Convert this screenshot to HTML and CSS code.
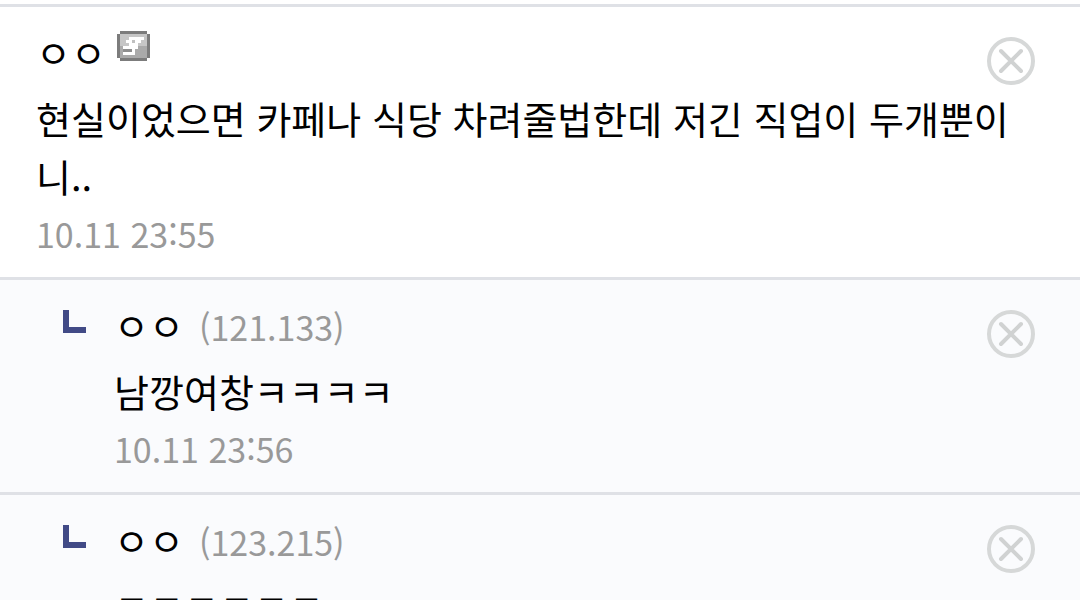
FILE: index.html
```html
<!DOCTYPE html>
<html lang="ko">
<head>
    <meta charset="UTF-8">
    <meta name="viewport" content="width=device-width, initial-scale=1.0">
    <title>댓글</title>
    <link rel="stylesheet" href="styles.css">
</head>
<body>
    <svg class="sprite" aria-hidden="true">
        <symbol id="icon-delete" viewBox="0 0 50 50">
            <circle cx="25" cy="25" r="22" fill="none" stroke="#d6d8d8" stroke-width="4"/>
            <path d="M15 15L35 35M35 15L15 35" stroke="#d0d2d2" stroke-width="4" stroke-linecap="round"/>
        </symbol>
    </svg>

    <ul class="comments">
        <li class="comment">
            <div class="body">
                <div class="writer">
                    <span class="nick">ㅇㅇ</span>
                    <svg class="badge" viewBox="0 0 11 10" aria-hidden="true">
                        <path fill="#7c7c7c" d="M1 0H10V1H11V9H10V10H1V9H0V1H1Z"/>
                        <path fill="#c6c6c6" d="M1 1H10V5H1Z"/>
                        <path fill="#aaa" d="M1 5H10V9H1Z"/>
                        <path fill="#fff" d="M4 2H9V3H8V4H7V6H6V8H2V7H5V6H2V5H4V4H3V3H4Z"/>
                        <path fill="#c0c0c0" d="M5 3H6V4H5Z"/>
                        <path fill="#8e8e8e" d="M2 6H5V7H2Z"/>
                    </svg>
                </div>
                <p class="text">현실이었으면 카페나 식당 차려줄법한데 저긴 직업이 두개뿐이니..</p>
                <time class="date">10.11 23:55</time>
            </div>
            <button class="delete" type="button" aria-label="삭제"><svg><use href="#icon-delete"/></svg></button>
        </li>
        <li class="comment reply">
            <span class="arrow"></span>
            <div class="body">
                <div class="writer">
                    <span class="nick">ㅇㅇ</span>
                    <span class="ip">(121.133)</span>
                </div>
                <p class="text">남깡여창ㅋㅋㅋㅋ</p>
                <time class="date">10.11 23:56</time>
            </div>
            <button class="delete" type="button" aria-label="삭제"><svg><use href="#icon-delete"/></svg></button>
        </li>
        <li class="comment reply">
            <span class="arrow"></span>
            <div class="body">
                <div class="writer">
                    <span class="nick">ㅇㅇ</span>
                    <span class="ip">(123.215)</span>
                </div>
                <p class="text">ㅋㅋㅋㅋㅋㅋ</p>
            </div>
            <button class="delete" type="button" aria-label="삭제"><svg><use href="#icon-delete"/></svg></button>
        </li>
    </ul>
</body>
</html>
```
FILE: styles.css
```css
:root {
    --text: #000;
    --muted: #999;
    --line: #dfe1e6;
    --reply-bg: #fafbfd;
    --arrow: #414a86;
}

* {
    margin: 0;
    padding: 0;
    box-sizing: border-box;
}

body {
    background: #fff;
    color: var(--text);
    font-family: "Noto Sans CJK KR", sans-serif;
    font-size: 38px;
    line-height: 58px;
}

.sprite {
    display: none;
}

.comments {
    list-style: none;
    padding-top: 4px;
}

.comment {
    display: flex;
    align-items: flex-start;
    padding: 16px 44px 14px 36px;
    border-top: 3px solid var(--line);
}

.reply {
    padding-left: 63px;
    background: var(--reply-bg);
}

.body {
    flex: 1;
    min-width: 0;
}

.writer {
    display: flex;
    align-items: baseline;
    height: 60px;
    margin-bottom: 6px;
}

.badge {
    align-self: flex-start;
    width: 33px;
    height: 30px;
    margin: 8px 0 0 11px;
}

.ip {
    margin-left: 15px;
    color: var(--muted);
    font-size: 34px;
}

.date {
    display: block;
    color: var(--muted);
    font-size: 34px;
    line-height: 58px;
}

.arrow {
    width: 23px;
    height: 23px;
    margin: 14px 28px 0 0;
    border: solid var(--arrow);
    border-width: 0 0 6px 6px;
}

.delete {
    width: 50px;
    height: 50px;
    margin: 13px 0 0 -50px;
    border: none;
    background: none;
    cursor: pointer;
}

.delete svg {
    display: block;
    width: 50px;
    height: 50px;
}
```
